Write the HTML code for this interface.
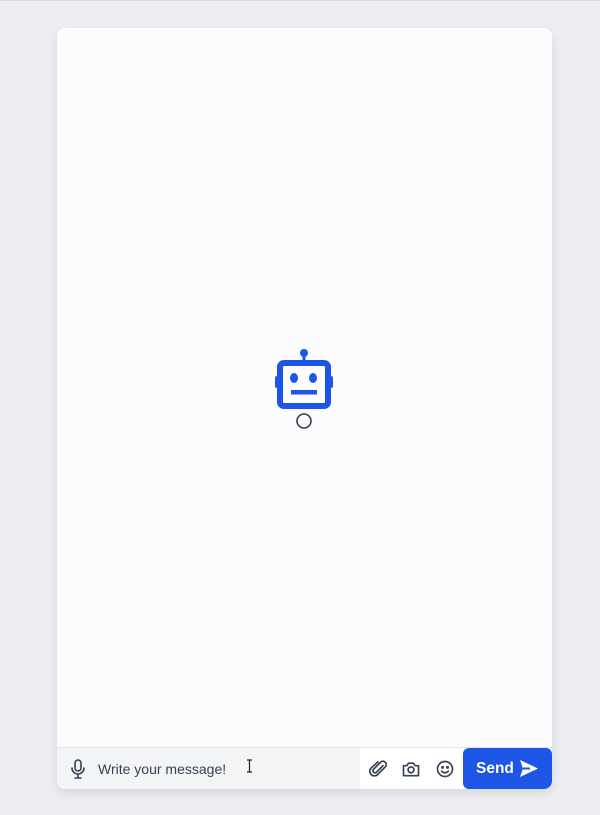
<!DOCTYPE html>
<html><head><style>
body{margin:0;width:600px;height:815px;background:#eceef2;font-family:"Liberation Sans",sans-serif;position:relative;overflow:hidden;border-top:1px solid #d8dadf;box-sizing:border-box}
.card{position:absolute;left:57px;top:27px;width:495px;height:761px;background:#fcfbfd;border-radius:8px;box-shadow:0 4px 10px rgba(0,0,0,.1);overflow:hidden}
.bar{position:absolute;left:0;bottom:0;width:495px;height:41px;border-top:1px solid #e3e4e8;background:#fff}
.inp{position:absolute;left:0;top:0;width:303px;height:41px;background:#f3f4f6}
.txt{position:absolute;left:41px;top:13px;font-size:14px;color:#374151}
.send{position:absolute;left:406px;top:0;width:89px;height:41px;background:#1d55e6;border-radius:6px;color:#fff;font-weight:bold;font-size:15px}
</style></head><body>
<div class="card">
<svg style="position:absolute;left:217px;top:320px" width="62" height="86" viewBox="0 0 62 86">
<circle cx="30" cy="5" r="4" fill="#1d55e6"/><rect x="28.5" y="5" width="3" height="9" fill="#1d55e6"/>
<rect x="6" y="15" width="48" height="43" rx="4" fill="none" stroke="#1d55e6" stroke-width="6"/>
<rect x="1" y="28" width="4" height="12" rx="2" fill="#1d55e6"/><rect x="55" y="28" width="4" height="12" rx="2" fill="#1d55e6"/>
<ellipse cx="20" cy="30" rx="4" ry="5" fill="#1d55e6"/><ellipse cx="39" cy="30" rx="4" ry="5" fill="#1d55e6"/>
<rect x="17" y="42" width="26" height="4.5" fill="#1d55e6"/>
<circle cx="30" cy="73" r="7" fill="none" stroke="#374151" stroke-width="1.6"/>
</svg>
<div class="bar">
<div class="inp">
<svg style="position:absolute;left:12px;top:11px" width="18" height="20" viewBox="0 0 18 20" fill="none" stroke="#374151" stroke-width="1.6" stroke-linecap="round"><rect x="6" y="1" width="6" height="11" rx="3"/><path d="M3 9a6 6 0 0 0 12 0M9 15v4M6 19h6"/></svg>
<div class="txt">Write your message!</div>
<svg style="position:absolute;left:189px;top:11px" width="7" height="14" viewBox="0 0 7 14" fill="none" stroke="#222" stroke-width="1.2"><path d="M1 1h5M1 13h5M3.5 1v12"/></svg>
</div>
<svg style="position:absolute;left:311px;top:11px" width="20" height="20" viewBox="0 0 24 24" fill="none" stroke="#374151" stroke-width="2" stroke-linecap="round"><path d="M18 8l-8 8a2.5 2.5 0 0 1-3.5-3.5l9-9a4 4 0 0 1 5.6 5.6l-9.5 9.5a5.5 5.5 0 0 1-7.8-7.8L12 3.5"/></svg>
<svg style="position:absolute;left:344px;top:11px" width="20" height="20" viewBox="0 0 24 24" fill="none" stroke="#374151" stroke-width="2" stroke-linejoin="round"><path d="M3 8h4l2-3h6l2 3h4v12H3z"/><circle cx="12" cy="13" r="3.5"/></svg>
<svg style="position:absolute;left:378px;top:11px" width="20" height="20" viewBox="0 0 24 24" fill="none" stroke="#374151" stroke-width="2" stroke-linecap="round"><circle cx="12" cy="12" r="9"/><path d="M8 14.5a5 5 0 0 0 8 0"/><circle cx="9" cy="10" r=".8"/><circle cx="15" cy="10" r=".8"/></svg>
<div class="send"><span style="position:absolute;left:13px;top:12px;font-size:15.5px">Send</span>
<svg style="position:absolute;left:56px;top:11px" width="20" height="19" viewBox="0 0 20 19"><path d="M1 1l18 8.5L1 18l3-8.5z" fill="#fff"/><path d="M4 9.5h7" stroke="#1d55e6" stroke-width="2"/></svg></div>
</div>
</div>
</body></html>
